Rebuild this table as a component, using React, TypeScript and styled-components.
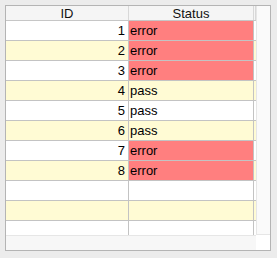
import styled, { createGlobalStyle } from "styled-components"

const rows = [
    { id: 1, status: 'error' },
    { id: 2, status: 'error' },
    { id: 3, status: 'error' },
    { id: 4, status: 'pass' },
    { id: 5, status: 'pass' },
    { id: 6, status: 'pass' },
    { id: 7, status: 'error' },
    { id: 8, status: 'error' },
    null,
    null,
    null,
]

const GlobalStyle = createGlobalStyle`
  body {
    margin: 0;
    background: #ececec;
    font-family: "Liberation Sans", Arial, sans-serif;
  }
`

const App = () => {
    return (
        <Page>
            <GlobalStyle />
            <Frame>
                <Viewport>
                    <HeaderRow>
                        <HeaderCell $w={123}>ID</HeaderCell>
                        <HeaderCell $w={125}>Status</HeaderCell>
                        <HeaderCell $w={2} />
                    </HeaderRow>
                    {rows.map((row, i) => (
                        <Row key={i} $alt={i % 2 === 1}>
                            <Cell $w={123} $right>{row ? row.id : ''}</Cell>
                            <Cell $w={125} $bad={row?.status === 'error'}>{row ? row.status : ''}</Cell>
                            <Filler />
                        </Row>
                    ))}
                </Viewport>
                <VScroll />
                <HScroll />
                <Corner />
            </Frame>
        </Page>
    )
}

const Page = styled.div`
  padding: 5px;
`

const Frame = styled.div`
  width: 264px;
  height: 244px;
  border: 1px solid #b4b4b4;
  display: grid;
  grid-template-columns: 250px 14px;
  grid-template-rows: 229px 15px;
  background: #fff;
`

const Viewport = styled.div`
  overflow: hidden;
  display: flex;
  flex-direction: column;
`

const HeaderRow = styled.div`
  display: flex;
  flex: none;
  height: 14px;
  background: #f5f5f5;
  border-bottom: 1px solid #c6c6c6;
`

const HeaderCell = styled.div<{ $w: number }>`
  box-sizing: border-box;
  width: ${p => p.$w}px;
  border-right: 1px solid #d8d8d8;
  font-size: 13px;
  line-height: 15px;
  color: #111;
  text-align: center;
`

const Row = styled.div<{ $alt: boolean }>`
  display: flex;
  flex: none;
  height: 19px;
  background: ${p => (p.$alt ? '#fffbd4' : '#ffffff')};
  border-bottom: 1px solid #c3c3c3;
`

const Cell = styled.div<{ $w: number; $right?: boolean; $bad?: boolean }>`
  box-sizing: border-box;
  width: ${p => p.$w}px;
  border-right: 1px solid #c3c3c3;
  padding: 0 3px 0 1px;
  font-size: 13px;
  line-height: 19px;
  color: #000;
  text-align: ${p => (p.$right ? 'right' : 'left')};
  background: ${p => (p.$bad ? '#ff7f7f' : 'transparent')};
`

const Filler = styled.div`
  flex: 1;
`

const VScroll = styled.div`
  background: #fafafa;
  border-left: 1px solid #e6e6e6;
  border-bottom: 1px solid #e6e6e6;
`

const HScroll = styled.div`
  background: #f7f7f7;
  border-top: 1px solid #e6e6e6;
`

const Corner = styled.div`
  background: #ffffff;
`

export default App
